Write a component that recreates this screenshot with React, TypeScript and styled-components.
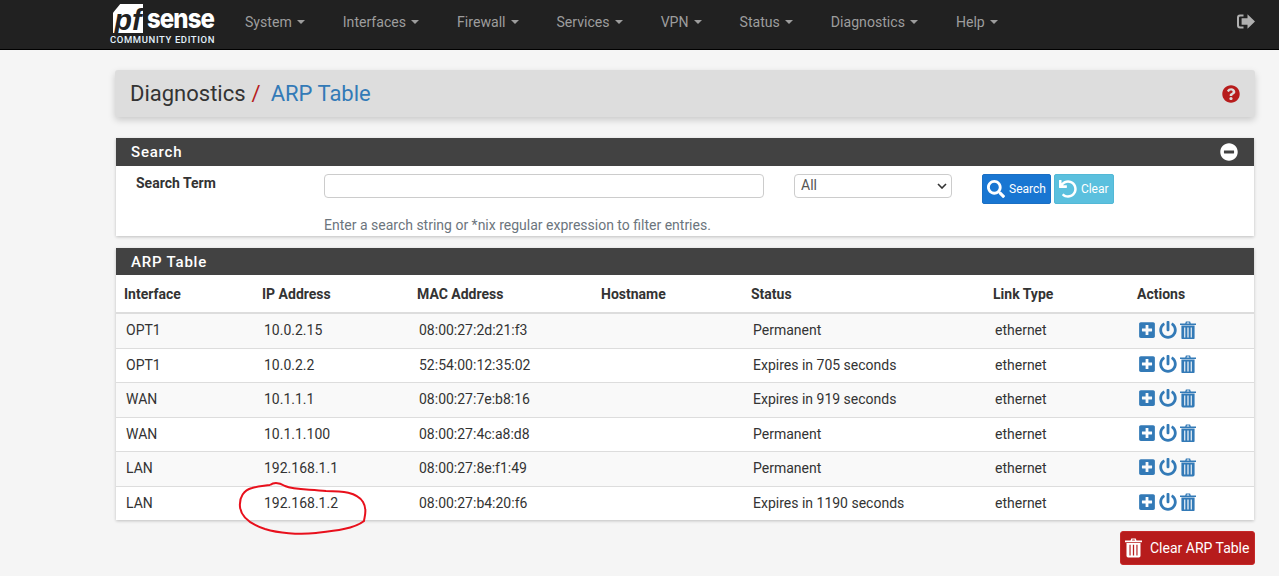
import React from "react";
import styled, { createGlobalStyle } from "styled-components";
import {
  FaSearch,
  FaUndo,
  FaPlusSquare,
  FaPowerOff,
  FaQuestionCircle,
  FaMinusCircle,
} from "react-icons/fa";

const menus = [
  "System",
  "Interfaces",
  "Firewall",
  "Services",
  "VPN",
  "Status",
  "Diagnostics",
  "Help",
];

const rows = [
  ["OPT1", "10.0.2.15", "08:00:27:2d:21:f3", "Permanent"],
  ["OPT1", "10.0.2.2", "52:54:00:12:35:02", "Expires in 705 seconds"],
  ["WAN", "10.1.1.1", "08:00:27:7e:b8:16", "Expires in 919 seconds"],
  ["WAN", "10.1.1.100", "08:00:27:4c:a8:d8", "Permanent"],
  ["LAN", "192.168.1.1", "08:00:27:8e:f1:49", "Permanent"],
  ["LAN", "192.168.1.2", "08:00:27:b4:20:f6", "Expires in 1190 seconds"],
];

const columns = [
  { title: "Interface", width: 138 },
  { title: "IP Address", width: 155 },
  { title: "MAC Address", width: 184 },
  { title: "Hostname", width: 150 },
  { title: "Status", width: 242 },
  { title: "Link Type", width: 144 },
  { title: "Actions", width: 125 },
];

const TrashIcon: React.FC<{ size: number }> = ({ size }) => (
  <svg width={size} height={size * 1.15} viewBox="0 0 16 18.4" fill="currentColor">
    <path d="M5.2 2.4 L5.9 0.4 H10.1 L10.8 2.4 H16 V4 H0 V2.4 Z M6.6 2.4 H9.4 L9 1.5 H7 Z" fillRule="evenodd" />
    <path
      d="M1.4 4.6 H14.6 V16.8 Q14.6 18.4 13 18.4 H3 Q1.4 18.4 1.4 16.8 Z M4.2 6.4 V16.4 H5.3 V6.4 Z M7.4 6.4 V16.4 H8.6 V6.4 Z M10.7 6.4 V16.4 H11.8 V6.4 Z"
      fillRule="evenodd"
    />
  </svg>
);

const LogoutIcon = () => (
  <svg width="18" height="15" viewBox="0 0 18 15" fill="currentColor">
    <path d="M6.5 0.5 H3 Q0 0.5 0 3.5 V11.5 Q0 14.5 3 14.5 H6.5 V12.5 H3.2 Q2 12.5 2 11.3 V3.7 Q2 2.5 3.2 2.5 H6.5 Z" />
    <path d="M10.5 0.3 L18 7.5 L10.5 14.7 V10.7 H4.6 V4.3 H10.5 Z" />
  </svg>
);

const App: React.FC = () => {
  return (
    <Page>
      <GlobalStyle />
      <Navbar>
        <Logo>
          <LogoTop>
            <LogoBadge>
              <LogoBadgeText>pf</LogoBadgeText>
            </LogoBadge>
            <LogoWord>sense</LogoWord>
          </LogoTop>
          <LogoEdition>COMMUNITY EDITION</LogoEdition>
        </Logo>
        <Menu>
          {menus.map((menu) => (
            <MenuItem key={menu}>
              {menu}
              <Caret />
            </MenuItem>
          ))}
        </Menu>
        <Logout>
          <LogoutIcon />
        </Logout>
      </Navbar>

      <Content>
        <PageHeader>
          <Crumbs>
            Diagnostics<Slash>/</Slash>
            <CrumbLink>ARP Table</CrumbLink>
          </Crumbs>
          <HelpLink>
            <FaQuestionCircle size={18} />
          </HelpLink>
        </PageHeader>

        <SearchPanel>
          <PanelHeading>
            Search
            <CollapseButton>
              <FaMinusCircle size={18} />
            </CollapseButton>
          </PanelHeading>
          <SearchBody>
            <SearchLabel>Search Term</SearchLabel>
            <SearchInput type="text" />
            <SelectWrap>
              <SearchSelect defaultValue="All">
                <option>All</option>
              </SearchSelect>
              <SelectArrow width="10" height="6" viewBox="0 0 10 6">
                <path d="M1 1 L5 5 L9 1" fill="none" stroke="#333" strokeWidth="1.6" />
              </SelectArrow>
            </SelectWrap>
            <Buttons>
              <Button $bg="#1976d2" $border="#1a6fc4">
                <FaSearch size={18} />
                Search
              </Button>
              <Button $bg="#5bc0de" $border="#52b8d6">
                <FaUndo size={18} />
                Clear
              </Button>
            </Buttons>
            <HelpText>
              Enter a search string or *nix regular expression to filter entries.
            </HelpText>
          </SearchBody>
        </SearchPanel>

        <TablePanel>
          <PanelHeading $short>ARP Table</PanelHeading>
          <Table>
            <colgroup>
              {columns.map((col) => (
                <col key={col.title} width={col.width} />
              ))}
            </colgroup>
            <thead>
              <tr>
                {columns.map((col) => (
                  <Th key={col.title}>{col.title}</Th>
                ))}
              </tr>
            </thead>
            <tbody>
              {rows.map((row, index) => (
                <Tr key={index} $odd={index % 2 === 0}>
                  <Td>{row[0]}</Td>
                  <Td>{row[1]}</Td>
                  <Td>{row[2]}</Td>
                  <Td></Td>
                  <Td>{row[3]}</Td>
                  <Td>ethernet</Td>
                  <Td>
                    <Actions>
                      <FaPlusSquare size={18} />
                      <FaPowerOff size={18} />
                      <TrashIcon size={16} />
                    </Actions>
                  </Td>
                </Tr>
              ))}
            </tbody>
          </Table>
        </TablePanel>

        <Footer>
          <ClearButton>
            <TrashIcon size={17} />
            Clear ARP Table
          </ClearButton>
        </Footer>
      </Content>

      {/* hand drawn circle round the last IP */}
      <Scribble width="134" height="60" viewBox="0 0 134 60">
        <path
          d="M32 5 C36 2 42 3 47 6 C56 10 72 9 88 11 C104 11 119 12 125 22 C130 30 126 38 126 41 C116 49 96 51 78 53 C60 55 40 53 27 49 C12 44 3 36 2 27 C1 17 6 10 14 8 C20 6 26 6 32 5"
          fill="none"
          stroke="#e8101c"
          strokeWidth="2"
        />
      </Scribble>
    </Page>
  );
};

export default App;

const GlobalStyle = createGlobalStyle`
  html, body {
    margin: 0;
    padding: 0;
    height: 100%;
    overflow: hidden;
    background: #f5f5f5;
  }
  * {
    box-sizing: border-box;
  }
`;

const Page = styled.div`
  position: relative;
  height: 576px;
  font-family: "Roboto", sans-serif;
  font-size: 14px;
  color: #333;
  background: #f5f5f5;
`;

const Navbar = styled.div`
  display: flex;
  align-items: flex-start;
  height: 50px;
  padding-left: 110px;
  background: #212121;
  border-bottom: 1px solid #000;
`;

const Logo = styled.div`
  display: flex;
  flex-direction: column;
  width: 135px;
  padding-top: 4px;
`;

const LogoTop = styled.div`
  display: flex;
  align-items: flex-end;
  height: 29px;
  padding-left: 3px;
`;

const LogoBadge = styled.div`
  display: flex;
  align-items: flex-end;
  justify-content: center;
  width: 30px;
  height: 29px;
  background: #fff;
  clip-path: polygon(24% 0, 100% 0, 100% 100%, 0 100%, 0 30%);
`;

const LogoBadgeText = styled.span`
  font-family: "Liberation Sans", sans-serif;
  font-size: 29px;
  line-height: 25px;
  font-weight: 700;
  font-style: italic;
  color: #212121;
`;

const LogoWord = styled.span`
  margin: 0 0 2px 4px;
  font-family: "Inter", sans-serif;
  font-size: 24px;
  line-height: 23px;
  font-weight: 800;
  color: #fff;
  letter-spacing: -0.9px;
  transform: scaleY(1.12);
  transform-origin: 50% 80%;
`;

const LogoEdition = styled.div`
  margin-top: 1px;
  font-size: 9.5px;
  line-height: 11px;
  font-weight: 500;
  letter-spacing: 0.6px;
  color: #e3f2fd;
  white-space: nowrap;
`;

const Menu = styled.div`
  display: flex;
  gap: 38px;
  height: 44px;
  align-items: center;
`;

const MenuItem = styled.div`
  display: flex;
  align-items: center;
  gap: 5px;
  font-size: 14.1px;
  color: #9d9d9d;
`;

const Caret = styled.span`
  width: 0;
  height: 0;
  border-top: 4px solid #9d9d9d;
  border-left: 4px solid transparent;
  border-right: 4px solid transparent;
`;

const Logout = styled.div`
  margin-left: auto;
  margin-right: 24px;
  margin-top: 14px;
  color: #b0b0b0;
`;

const Content = styled.div`
  display: flex;
  flex-direction: column;
  padding: 20px 24px 0 115px;
`;

const PageHeader = styled.div`
  display: flex;
  align-items: center;
  justify-content: space-between;
  height: 47px;
  padding: 0 15px 0 15px;
  margin-bottom: 21px;
  background: #ddd;
  border-radius: 3px;
  box-shadow: 0 3px 7px rgba(0, 0, 0, 0.18);
`;

const Crumbs = styled.div`
  font-size: 22px;
  color: #333;
  white-space: nowrap;
`;

const Slash = styled.span`
  margin: 0 10px 0 6px;
  color: #b71c1c;
`;

const CrumbLink = styled.span`
  color: #337ab7;
`;

const HelpLink = styled.span`
  display: flex;
  color: #b71c1c;
`;

const PanelBox = styled.div`
  margin: 0 1px;
  background: #fff;
  box-shadow: 0 1px 3px rgba(0, 0, 0, 0.22);
`;

const SearchPanel = styled(PanelBox)`
  height: 98px;
  margin-bottom: 12px;
`;

const TablePanel = styled(PanelBox)`
  height: 272px;
  margin-bottom: 11px;
`;

const PanelHeading = styled.div<{ $short?: boolean }>`
  display: flex;
  align-items: center;
  justify-content: space-between;
  height: ${({ $short }) => ($short ? "27px" : "28px")};
  padding: 0 16px 0 15px;
  background: #424242;
  color: #fff;
  font-size: 15px;
  font-weight: 500;
  letter-spacing: 0.8px;
`;

const CollapseButton = styled.span`
  display: flex;
  color: #fff;
`;

const SearchBody = styled.div`
  display: grid;
  grid-template-columns: 158px 440px 158px auto;
  grid-template-rows: 30px auto;
  column-gap: 30px;
  padding: 8px 0 0 20px;
`;

const SearchLabel = styled.div`
  line-height: 18px;
  font-weight: 700;
  color: #333;
`;

const SearchInput = styled.input`
  height: 24px;
  padding: 0 8px;
  background: #fff;
  border: 1px solid #ccc;
  border-radius: 4px;
`;

const SelectWrap = styled.div`
  position: relative;
  height: 24px;
`;

const SearchSelect = styled.select`
  width: 100%;
  height: 24px;
  padding: 0 6px 2px;
  appearance: none;
  font-family: "Roboto", sans-serif;
  font-size: 14px;
  color: #555;
  background: #fff;
  border: 1px solid #ccc;
  border-radius: 4px;
`;

const SelectArrow = styled.svg`
  position: absolute;
  right: 5px;
  top: 9px;
  pointer-events: none;
`;

const Buttons = styled.div`
  display: flex;
  gap: 3px;
`;

const Button = styled.div<{ $bg: string; $border: string }>`
  display: flex;
  align-items: center;
  gap: 4px;
  height: 30px;
  padding: 0 4px;
  font-size: 12px;
  color: #fff;
  background: ${({ $bg }) => $bg};
  border: 1px solid ${({ $border }) => $border};
  border-radius: 2px;
`;

const HelpText = styled.div`
  grid-column: 2 / 5;
  margin-top: 12px;
  line-height: 18px;
  color: #6c757d;
`;

const Table = styled.table`
  width: 100%;
  table-layout: fixed;
  border-collapse: collapse;
`;

const Th = styled.th`
  height: 38px;
  padding: 0 8px;
  text-align: left;
  font-weight: 700;
  font-size: 14px;
  border-bottom: 2px solid #ddd;
`;

/* row heights alternate 35/34: the source's 34.5px rows after pixel snapping */
const Tr = styled.tr<{ $odd: boolean }>`
  height: ${({ $odd }) => ($odd ? "35px" : "34px")};
  background: ${({ $odd }) => ($odd ? "#f9f9f9" : "#fff")};
`;

const Td = styled.td`
  padding: 0 10px 1px;
  font-size: 14px;
  border-bottom: 1px solid #ddd;
  tr:last-child > & {
    border-bottom: none;
  }
`;

const Actions = styled.div`
  display: flex;
  align-items: center;
  gap: 3px;
  margin: -1px 0 0 -1px;
  color: #337ab7;
`;

const Footer = styled.div`
  display: flex;
  justify-content: flex-end;
`;

const ClearButton = styled.div`
  display: flex;
  align-items: center;
  gap: 8px;
  width: 135px;
  height: 34px;
  padding-left: 4px;
  font-size: 14px;
  color: #fff;
  background: #b71c1c;
  border: 1px solid #c62828;
  border-radius: 3px;
`;

const Scribble = styled.svg`
  position: absolute;
  left: 238px;
  top: 480px;
  pointer-events: none;
`;
